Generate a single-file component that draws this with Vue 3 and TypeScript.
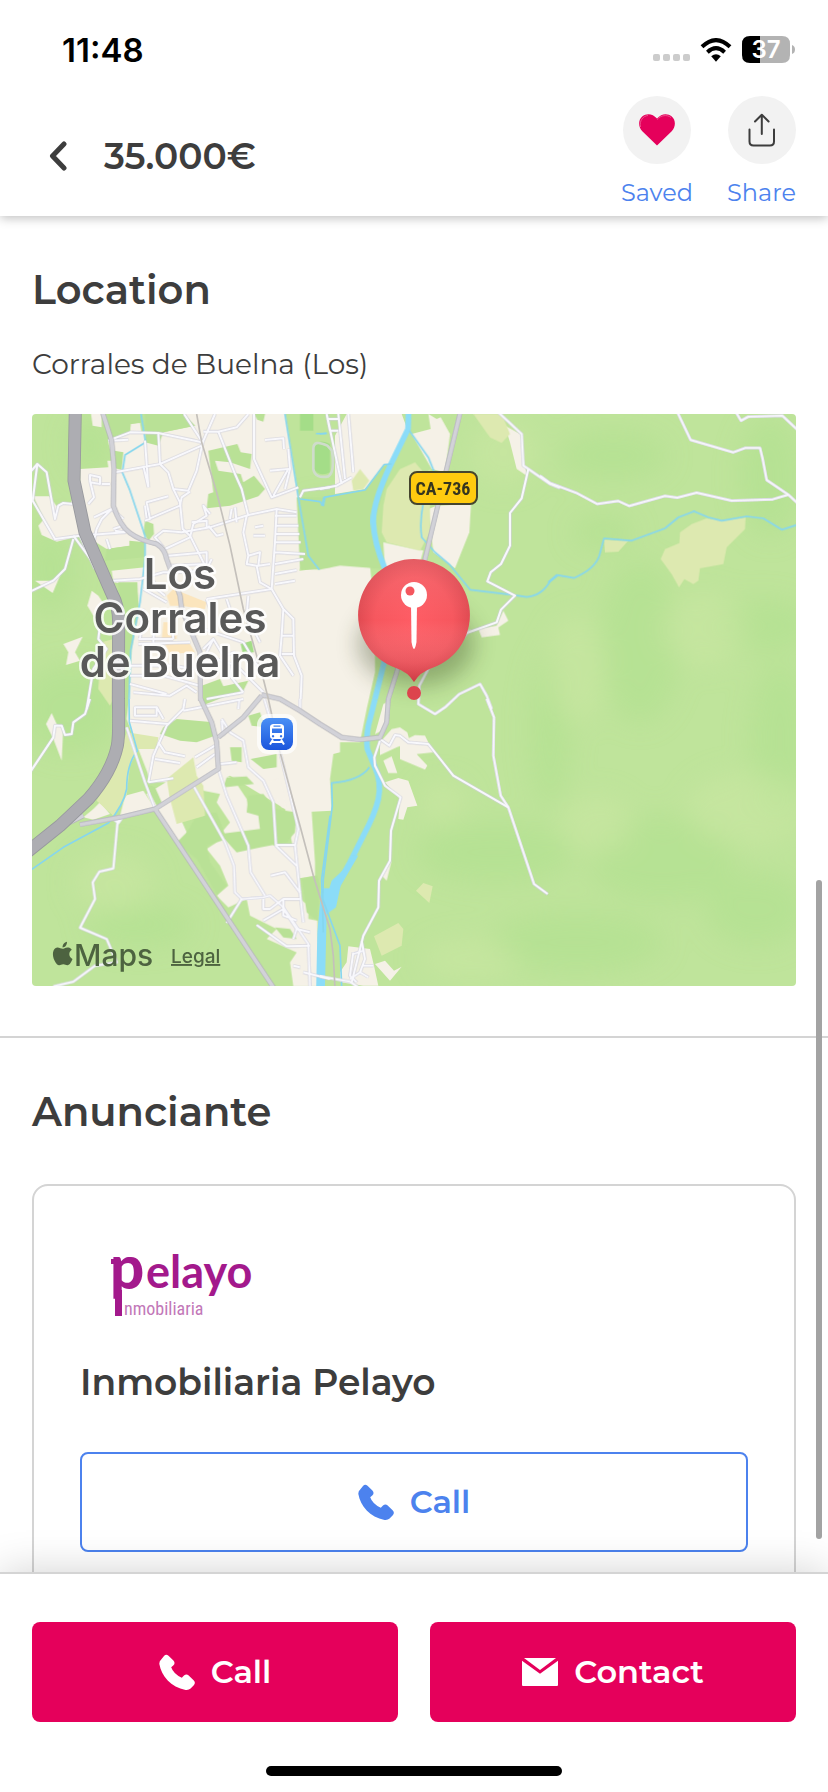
<script setup lang="ts">
type Tile = 'nw' | 'n' | 'ne' | 'sw' | 's'
type Shapes = Partial<Record<Tile, string[]>>
interface Feature { cls: string; d: string; at: string }

// The map is drawn in tiles; each tile keeps its own local coordinates.
const origin: Record<Tile, [number, number]> = {
  nw: [0, 0], n: [870, 0], ne: [1560, 0], sw: [0, 870], s: [870, 870],
}

const town: Shapes = {
  nw: [
    'M183 15H215V55L188 50Z',
    'M235 100L240 78 300 70 302 45 330 42 335 72 390 70 400 70 495 50 460 15H765L805 265 825 440 808 485 900 475 920 465 935 380 1010 375 1025 520 1035 750 1035 790 1010 900 990 1000 930 1000 930 1030 910 1035 900 1110 905 1205 845 1208 855 1360 855 1400 808 1408 765 1200 600 1100 470 1130 400 1120 360 1120 352 1090 290 930 297 870 305 720 328 600 320 530 250 520 245 485 345 475 345 448 300 410 230 420 190 395 150 370 118 290 150 225 150 180 235 175 232 155 250 155Z',
    'M10 262L58 262 80 292 95 282 130 284 150 340 152 380 80 398 35 378 25 350 42 330Z',
    'M15 515L60 515 90 500 68 552Z', 'M185 545L205 560 232 600 190 620 172 590Z', 'M100 705L158 683 135 730 150 755 108 768 115 730Z',
  ],
  n: [
    'M45 80L80 15H245L262 60 210 165 190 170 135 240 45 255Z',
    'M325 15L350 30 362 25 390 75 375 190 335 180 275 75 332 60Z', 'M350 290L453 285 448 370 405 478 340 430 325 300Z',
    'M190 400L310 425 300 460 195 480Z', 'M555 50L600 75 620 200 590 180 570 100Z', 'M550 605L565 635 535 655 540 678 485 685 475 660 530 650Z',
    'M435 665L455 662 430 690Z',
  ],
  sw: [
    'M48 75L65 42 80 75 100 85 95 185 70 120Z', 'M190 330L210 310 240 345 190 362 160 355Z', 'M285 290L340 275 372 325 270 350Z',
    'M375 335L350 285 415 245 420 290 470 400 465 430 435 425Z', 'M500 245L565 215 610 240 650 300 655 330 720 350 730 440 800 440 810 600 835 620 835 660 862 665 865 862H790L780 790 800 760 710 720 740 690 660 650 650 600 595 625 560 590 595 560 570 500 530 450 560 430 575 400 600 370 560 310 570 285 520 275Z',
    'M355 250L368 180 385 120 480 130 545 120 560 200 480 180 430 240Z', 'M705 280L700 250 750 240 770 330 755 325 740 300Z',
  ],
  s: [
    'M190 15L200 10 195 90 165 105Z', 'M180 130L215 90 240 85 262 100 270 130 230 145 180 168Z', 'M240 130L285 108 315 110 340 160 290 165 322 200 315 212 240 180Z',
    'M190 185L215 172 232 222 205 222Z', 'M195 250L235 237 265 245 292 320 262 325 250 362 235 360 240 300Z', 'M185 530L215 485 200 545Z',
    'M85 742L150 750 162 800 175 860 130 860 62 850 60 820 80 790Z', 'M165 795L195 785 222 815 245 803 210 845Z',
  ],
}

const park: Shapes = {
  nw: [
    'M233 15H330L335 40 302 45 300 70 238 90Z', 'M345 15H462L495 50 400 70 385 110 345 100Z', 'M253 125L280 130 275 182 255 178Z',
    'M535 125L622 105 632 130 665 135 660 180 600 160 555 155 565 185 632 195 640 220 672 200 705 240 685 262 600 290 530 298 535 255 550 250Z',
    'M345 335L370 345 372 375 355 395 340 372Z', 'M298 395L345 400 345 445 225 455 230 420 298 410Z', 'M672 15H705L700 38 682 32Z',
    'M285 940L265 520 322 520 325 590 300 730Z', 'M515 830L570 810 580 832 655 815 640 845 580 865 515 890Z',
  ],
  n: ['M5 265L135 243 190 170 215 165 160 345 195 480 60 470 0 482-60 480-70 265Z'],
  sw: ['M400 85L440 60 550 70 555 110 500 130 450 125 390 105Z', 'M600 145H635V190L605 185Z', 'M590 235L650 232 672 255 580 265Z', 'M655 50L690 40 705 85 665 80Z', 'M662 180L740 165 740 205 700 210Z',
    'M470 400L500 350 560 340 590 420 560 430 530 440 540 490 590 560 560 590 590 640 500 480 440 430Z', 'M655 290L700 285 735 330 800 340 795 400 770 430 690 445 620 460 570 405 690 390 685 350 650 340Z',
    'M815 540L862 530 870 565 862 665 830 640Z', 'M735 685L780 690 800 720 760 715Z', 'M345 255L375 265 395 310 380 320Z'],
}
const bright: Shapes = { nw: ['M632 705L665 695 672 730 638 732Z', 'M850 105Q875 90 900 105V190Q870 205 850 180Z', 'M810 15H850V65H810Z'] }
const field: Shapes = {
  nw: ['M215 700L250 690 250 870 240 890 205 840Z'],
  n: ['M460 15H545L570 75 545 102 510 85Z', 'M95 215L120 180 148 215 130 240 100 245Z', 'M200 240L240 180 285 160 315 195 330 180 330 370 300 425 200 400 185 370 190 290Z'],
  ne: ['M332 450L345 420 388 402 390 370 425 345 470 328 520 334 587 325 585 360 530 415 520 465 450 478 445 515 430 525 403 510 387 535 365 495Z', 'M162 392L235 395 205 428 165 430Z'],
  sw: ['M290 100L385 115 380 150 325 150 300 200 290 290 250 350 200 305 260 190Z', 'M410 240L490 175 500 230 520 260 525 350 440 375 420 300Z'],
  s: ['M288 575L310 552 338 562 328 612Z', 'M162 712L235 672 250 690 245 740 185 770Z'],
}
const civic: Shapes = { nw: ['M410 560L430 540 530 580 525 600 450 590 420 590Z', 'M400 640H440V690L395 692Z', 'M405 705L480 705 495 730 420 735Z'] }

const river: Shapes = {
  n: ['M266 0L264 60 213 165Q158 280 160 340 162 400 195 480L215 640 190 770 165 870'],
  s: ['M165 0L145 80Q138 120 142 150L165 205Q185 250 175 300 165 345 130 410L90 490 40 580'],
}
const pool: Shapes = { s: ['M95 470L75 508 35 545 28 568 4 567-8 700-12 900H14L20 645 48 625 62 560 115 470Z'] }
const stream: Shapes = {
  nw: ['M333 15L347 100 285 138 277 190 300 245 345 380 345 450 330 580 302 725 297 870', 'M765 15L805 265 835 440 868 482', 'M810 270L870 278 880 290 885 265', 'M858 74H890'],
  n: ['M0 75L20 72', 'M5 290L12 265 135 243 192 167 214 165', 'M268 65L325 145 345 195', 'M310 280Q298 340 305 385L345 430 390 468 450 542 580 558 620 564Q665 560 690 517L712 500'],
  ne: ['M-5 520L20 498 72 507Q135 480 148 440L162 388 245 395 345 358 385 325 432 307 475 325 515 335 590 322 640 328 695 362 740 348'],
  sw: ['M297 0L298 70 322 155Q290 195 290 270 280 320 235 372L100 445 0 515', 'M900 350L875 540 880 700'],
  s: ['M148 205Q120 245 35 252L37 320 10 540 8 600 60 740 65 862'],
}

const lanes: Shapes = {
  nw: [
    'M0 190L22 165 50 190 75 330 85 290 100 282 128 285', 'M22 165L8 275 75 390 150 380 195 480', 'M0 548L70 515 105 480 130 390', 'M130 380L200 475', 'M210 650L205 690 230 720 190 780 170 900',
    'M235 95L300 70 385 72 495 95M240 95L295 92', 'M385 72L390 165 515 110M345 95L355 235M340 170L355 235M255 190L390 165', 'M390 165L415 190 430 240 475 245 500 185 518 100 462 15',
    'M518 100L555 15M520 68L565 68 620 55 655 15', 'M565 68L615 195 635 240 655 320', 'M672 15L672 150 725 265 805 235M720 185L775 180 730 260M705 93L760 88 762 120', 'M430 240L450 280 458 360 480 380 530 480',
    'M345 335L360 330 350 280 415 262M345 290L350 328M360 328L450 290 455 265 480 248', 'M400 415L375 385 400 365 455 370 540 355 655 318 740 300 800 310', 'M405 420L480 385 490 345 530 320 520 290 540 315',
    'M485 340L530 335 530 355M535 350L560 380 580 375M600 330L605 300M620 340L615 295', 'M740 300L735 400 725 540 530 570M735 320H800M735 350H805M735 375H808M735 400H812M735 430L825 435M735 465L820 450M735 495L800 483M735 525L795 515',
    'M675 355L700 350M670 380H705M650 320L640 370 655 440 690 430 685 470 720 465M655 440L650 465 680 470 690 520 725 540', 'M180 215V198L210 205V225L180 220M180 215L192 265 175 285M215 225L240 225M192 325L245 300 280 330M245 300L215 330 200 360 192 395',
    'M250 360L280 350 285 370 255 365M150 380L285 370M230 390L240 420', 'M415 440L530 430 530 465 420 470M430 490L530 485', 'M250 515L330 510 400 490 430 490M340 540L410 580M355 520L405 560M370 515L385 545',
    'M725 540L760 600 790 630 792 740 815 800 812 870M760 600L755 680 790 680M755 735L792 735M755 680L750 740 790 800', 'M590 570L600 600M530 570L540 600M655 560L650 620 690 700', 'M520 660L640 700 700 800M530 730L550 690 580 740 615 730M550 690L520 720',
    'M325 690H430M325 705L480 700M340 600L330 690M375 600L370 700M430 690L425 640', 'M300 770H430L490 780M300 800H400L510 830M300 825L410 855M310 850L420 860 470 830 500 850', 'M530 740L620 770 700 850M615 730L600 800 640 850M530 870L640 850',
    'M775 120L780 180 765 240M495 95L515 100M545 450L530 480', 'M810 265L820 245 900 235',
  ],
  n: ['M20 15L65 225M55 15L75 210M85 15L100 190M20 30H55M30 65H55M20 15L30 65', 'M0 240L50 230 95 205', 'M535 10L605 75 610 170 625 180 690 225 720 237', 'M625 180L605 268 570 312V410L543 465 512 490 502 517 585 560 543 602 530 640 440 672 420 700', 'M330 770L298 830 295 885 345 915 375 895 418 855 480 825 500 860 515 900'],
  ne: ['M-30 200L0 222 80 252 142 285 205 276 238 291 345 261 382 266 440 251 545 275 668 271 715 257', 'M380 5L422 93 550 130 585 117H630L638 150 650 213 715 257 745 285', 'M555 5L573 35 595 23 697 20 745 65'],
  sw: ['M180 0L165 45 130 70 125 105 105 108 95 80 75 80 70 115 0 220', 'M290 85L345 250 375 330', 'M265 360L262 375 250 508 208 518 188 550 195 600 150 686 230 720 260 790 195 800 130 848 70 862M250 360L265 372 275 358', 'M490 260L585 430 612 500 615 580 635 600 700 595 720 590 760 625 835 735 840 862',
    'M355 250L370 170 410 80 460 30 465 0M300 65L415 75M315 25H380V50H315ZM380 25L400 60M460 35L640 0M355 250L430 238', 'M385 130L405 160 465 172M375 180L450 192M495 175L555 140M500 205L555 165', 'M565 210L590 290 655 440 662 520 705 590M575 60L600 100 640 125 655 205 700 245 730 310 738 440 800 500M740 438H795', 'M703 0L750 160 805 390 795 440 812 600 820 670', 'M575 65L580 110M625 30L628 0M810 0V30', 'M635 600L590 672M722 530L765 520 810 580M700 600L700 630 720 630 760 600 810 600M700 665L760 630 800 690 840 700M680 678L770 742 840 740M760 600L760 650 800 665M790 800L810 805M800 690L790 720M820 820L900 840', 'M570 195L620 190'],
  s: ['M500 0L522 55 520 170 542 290 565 325 642 555 683 585', 'M565 325L400 230 325 135 265 130 240 110 225 108 208 140 180 120', 'M180 125L163 175 165 200 195 260 242 295 213 395 210 485 177 545 175 625 130 710 95 850', 'M100 760L90 830 110 850M125 725L135 780 120 820 90 840M100 765L130 755M130 800L160 800M120 820L145 835', 'M0 832L90 848 130 875'],
}
const streets: Shapes = {
  nw: ['M216 5L245 95 252 180 250 290Q270 350 300 372T380 405Q405 420 410 450L450 560 455 600 510 730 512 875'],
  n: ['M423 0L315 450 230 790 205 870 200 940 180 985 120 992 65 985 0 945-60 905-120 870-175 857'],
  sw: ['M512 0L545 70 560 130 565 210 375 330 270 355 150 377M375 330L740 880', 'M565 115L640 55 695-10', 'M-2 460L90 385 160 350'],
}
const rail: Shapes = { nw: ['M500 15L515 100 560 250 600 410 640 600 700 810 715 870 750 1030 810 1250 850 1400 900 1560 910 1640 915 1740'] }
const motorway: Shapes = { nw: ['M136 0L132 215 165 370 246 555Q266 590 266 640L265 870Q268 980 262 1010 245 1090 175 1170L90 1250-20 1338'] }

const layers: [string, Shapes][] = [
  ['town', town], ['park', park], ['bright', bright], ['field', field], ['civic', civic],
  ['river', river], ['pool', pool], ['stream', stream],
  ['lane-edge', lanes], ['lane', lanes], ['street-edge', streets], ['street', streets],
  ['rail', rail], ['motorway-edge', motorway], ['motorway', motorway],
]
const features: Feature[] = layers.flatMap(([cls, shapes]) =>
  (Object.keys(shapes) as Tile[]).flatMap((tile) =>
    (shapes[tile] ?? []).map((d) => ({ cls, d, at: `translate(${origin[tile].join(' ')})` })),
  ),
)

// Terrain shading: cx, cy, rx, ry, tone
const shades: [number, number, number, number, string][] = [
  [120, 900, 150, 130, 'dark'], [60, 480, 70, 130, 'dark'], [180, 110, 60, 90, 'dark'], [330, 1550, 160, 60, 'dark'],
  [870, 380, 80, 100, 'dark'], [1560, 960, 60, 240, 'dark'], [1400, 1330, 240, 90, 'dark'], [1750, 140, 160, 70, 'dark'],
  [2220, 200, 90, 180, 'dark'], [1720, 370, 90, 50, 'dark'], [1830, 700, 120, 240, 'dark'], [2200, 650, 150, 80, 'dark'],
  [1640, 1600, 260, 90, 'dark'], [2250, 1000, 90, 240, 'dark'], [1900, 1350, 220, 130, 'dark'], [2180, 1500, 150, 110, 'dark'],
  [1640, 780, 90, 160, 'light'], [2020, 660, 130, 110, 'light'], [2150, 1200, 180, 110, 'light'], [1320, 1650, 150, 60, 'light'],
  [1240, 1180, 70, 60, 'light'], [1420, 130, 100, 100, 'light'], [1700, 1250, 110, 90, 'light'], [250, 1420, 120, 90, 'light'],
]

const phone = 'M2.2 5.4 5 2.1Q7-.6 9.5 1.7L14.400 6.500Q16.600 8.900 14.500 11.200L12.200 13.200Q14.200 19.500 22.800 23.800L25 21.600Q27.400 19.500 29.700 21.500L34.600 26.200Q37 28.700 34.800 31.200L31.600 34.500Q29.700 36.300 26.600 35.900C12 33.300 2.300 22 .4 10.300Q0 7.400 2.200 5.400Z'
</script>

<template>
  <div class="screen">
    <header class="top">
      <div class="status">
        <span class="time">11:48</span>
        <div class="signals">
          <span class="dots"><i></i><i></i><i></i><i></i></span>
          <svg class="wifi" viewBox="0 0 32 24" aria-label="Wi-Fi">
            <path d="M2 8.800Q16-4.600 30 8.800" /><path d="M7.400 14.200Q16 6.200 24.600 14.200" />
            <path class="solid" d="M11.200 18.300Q16 14 20.800 18.300L16 23.800Z" />
          </svg>
          <svg class="battery" viewBox="0 0 54 28" aria-label="Battery 37%">
            <path class="rest" d="M18 0H40Q48 0 48 8V19Q48 27 40 27H18Z" />
            <path d="M18 0H8Q0 0 0 8V19Q0 27 8 27H18Z" />
            <path class="rest" d="M50 9Q53 10 53 13.500T50 18Z" />
            <text x="24" y="22">37</text>
          </svg>
        </div>
      </div>
      <div class="toolbar">
        <button class="back" type="button" aria-label="Back">
          <svg viewBox="0 0 18 30"><path d="M15 3 3.500 15 15 27" /></svg>
        </button>
        <strong class="price">35.000€</strong>
        <div class="actions">
          <button class="action" type="button">
            <span class="disc">
              <svg class="heart" viewBox="0 0 36 32">
                <path d="M18 31.500 3.300 17.300C-1.200 12.500-.6 5.800 3.200 2.600 7.600-1 13.600-.4 18 4.600 22.400-.4 28.400-1 32.800 2.600 36.600 5.800 37.200 12.500 32.700 17.300Z" />
                <path class="shine" d="M1.500 13C.2 7 4 1.800 9 1.500M18 5.600C22 1 28 .4 32 3.500" />
              </svg>
            </span>
            Saved
          </button>
          <button class="action" type="button">
            <span class="disc">
              <svg class="share" viewBox="0 0 28 34">
                <path d="M1.500 16.500V28.500Q1.500 32.500 5.500 32.500H22Q26 32.500 26 28.500V16.500M13.800 21V2M7 8.500 13.800 1.700 20.600 8.500" />
              </svg>
            </span>
            Share
          </button>
        </div>
      </div>
    </header>

    <main class="content">
      <section class="block">
        <h2>Location</h2>
        <p class="place">Corrales de Buelna (Los)</p>
        <svg class="map" viewBox="0 0 764 572" role="group" aria-label="Map of Los Corrales de Buelna">
          <defs>
            <filter id="haze" x="-50%" y="-50%" width="200%" height="200%"><feGaussianBlur stdDeviation="38" /></filter>
            <filter id="soft" x="-50%" y="-50%" width="200%" height="200%"><feGaussianBlur stdDeviation="11" /></filter>
            <radialGradient id="balloon" cx=".5" cy=".5" r=".58">
              <stop offset="0" stop-color="#ff5c64" /><stop offset=".6" stop-color="#f6575e" /><stop offset="1" stop-color="#d5434b" />
            </radialGradient>
            <linearGradient id="gloss" x2="0" y2="1">
              <stop offset="0" stop-color="#fff" stop-opacity=".1" /><stop offset=".5" stop-color="#fff" stop-opacity="0" />
              <stop offset="1" stop-color="#a01020" stop-opacity=".3" />
            </linearGradient>
            <linearGradient id="station" x2="0" y2="1"><stop offset="0" stop-color="#4a90f5" /><stop offset="1" stop-color="#1b55dc" /></linearGradient>
          </defs>
          <rect class="land" width="764" height="572" />
          <g transform="translate(-2 -5) scale(.33333)">
            <g filter="url(#haze)">
              <ellipse v-for="(s, i) in shades" :key="i" :class="s[4]" :cx="s[0]" :cy="s[1]" :rx="s[2]" :ry="s[3]" />
            </g>
            <path v-for="(f, i) in features" :key="i" :class="f.cls" :d="f.d" :transform="f.at" />
            <path class="track" d="M892 110Q850 90 850 120V180Q855 210 895 202Q915 190 906 125Z" />
          </g>

          <g class="city">
            <text x="148" y="175">Los</text>
            <text x="148" y="219">Corrales</text>
            <text x="148" y="263">de Buelna</text>
          </g>

          <rect class="shield" x="378" y="58" width="67" height="32" rx="7" />
          <text class="shield-text" x="411" y="81">CA-736</text>

          <g transform="translate(229 304)">
            <rect class="halo" x="-4" y="-4" width="40" height="40" rx="11" />
            <rect width="32" height="32" rx="8" fill="url(#station)" />
            <path class="train" fill-rule="evenodd" d="M12 6H20Q23 6.500 23 9V18Q23 21 20 21H12Q9 21 9 18V9Q9 6.500 12 6ZM12.500 7.600H19.500V8.800H12.500ZM11 10.500V15H21V10.500ZM12 17A1.200 1.200 0 1 0 12.100 17ZM20 17A1.200 1.200 0 1 0 20.100 17Z" />
            <path class="rails" d="M12 21.500 9 26.500M20 21.500 23 26.500M11 24H21" />
          </g>

          <ellipse class="pin-shadow" cx="384" cy="230" rx="58" ry="42" filter="url(#soft)" />
          <g>
            <path fill="url(#balloon)" d="M382 145A56 56 0 0 1 400 254Q388 258 382 268 376 258 364 254A56 56 0 0 1 382 145Z" />
            <path fill="url(#gloss)" d="M382 145A56 56 0 0 1 400 254Q388 258 382 268 376 258 364 254A56 56 0 0 1 382 145Z" />
            <path class="pin-glyph" d="M379 190H385L384.500 228Q382 242 379.500 228Z" />
            <circle class="pin-glyph" cx="382" cy="181" r="13" />
            <circle class="pin-hole" cx="378" cy="177" r="4.500" />
            <circle class="pin-dot" cx="382" cy="279" r="7" />
          </g>

          <g class="credit">
            <path d="M36.500 533.500C33.500 533 32 534.800 30.600 534.800 29 534.800 27.500 533.400 25.300 533.500 20.500 534 19.800 541 22.500 546.500 24 549.500 25.500 551.400 27.300 551.300 28.800 551.200 29.300 550.300 31.300 550.300 33.200 550.300 33.700 551.300 35.400 551.300 37.800 551.200 39.500 547.500 40.500 545 36.500 543 36.300 537.800 39.800 535.800 39 534.500 37.800 533.700 36.500 533.500ZM34.900 527.800C32.500 528.300 30.300 530.600 30.600 533.500 33.200 533.500 35.300 530.700 34.900 527.800Z" />
            <text class="maps" x="42" y="552">Maps</text>
            <a href="#legal"><text class="legal" x="139" y="549">Legal</text></a>
          </g>
        </svg>
      </section>

      <section class="block">
        <h2>Anunciante</h2>
        <article class="card">
          <svg class="logo" viewBox="0 0 200 100" role="img" aria-label="Pelayo Inmobiliaria">
            <text class="logo-p" x="30" y="57">p</text>
            <text class="logo-name" x="66" y="56">elayo</text>
            <path d="M31 27H38V32H31ZM35 58H42V84H35Z" />
            <text class="logo-sub" x="44" y="83">nmobiliaria</text>
          </svg>
          <h3>Inmobiliaria Pelayo</h3>
          <button class="btn outline" type="button">
            <svg class="phone" viewBox="0 0 36 36"><path :d="phone" /></svg>Call
          </button>
        </article>
      </section>
      <div class="scrollbar"></div>
    </main>

    <footer class="bottom">
      <div class="buttons">
        <button class="btn solid-btn" type="button"><svg class="phone" viewBox="0 0 36 36"><path :d="phone" /></svg>Call</button>
        <button class="btn solid-btn" type="button">
          <svg class="mail" viewBox="0 0 36 28"><path d="M2 0H34L18 12ZM0 2.800 18 15.800 36 2.800V27Q36 28 35 28H1Q0 28 0 27Z" /></svg>Contact
        </button>
      </div>
      <div class="home"></div>
    </footer>
  </div>
</template>

<style>
body { background: #fff; }
</style>

<style scoped>
.screen { display: flex; flex-direction: column; height: 100vh; overflow: hidden; background: #fff; color: #3d3d3d; font-family: Montserrat, Inter, sans-serif; }
button { padding: 0; border: 0; background: none; color: inherit; font: inherit; cursor: pointer; }
svg { display: block; }
h2, h3, p { margin: 0; }

.top { position: relative; z-index: 2; flex: none; background: #fff; box-shadow: 0 2px 10px rgba(0, 0, 0, .26); }
.status { display: flex; align-items: center; justify-content: space-between; box-sizing: border-box; height: 96px; padding: 4px 32px 0 62px; }
.time { color: #000; font: 600 33px/40px Inter, sans-serif; }
.signals { display: flex; align-items: center; gap: 10px; }
.dots { display: flex; align-self: flex-end; gap: 3px; padding-bottom: 3px; }
.dots i { width: 7px; height: 7px; border-radius: 2px; background: #ccc; }
.wifi { width: 32px; height: 24px; }
.wifi path { fill: none; stroke: #000; stroke-width: 4; }
.wifi .solid { fill: #000; stroke: none; }
.battery { width: 54px; height: 28px; }
.battery .rest { fill: #b3b3b3; }
.battery text { fill: #fff; font: 600 24px Inter, sans-serif; text-anchor: middle; }
.toolbar { display: flex; align-items: center; height: 120px; padding: 0 32px 0 48px; }
.back { width: 56px; padding: 8px 0; }
.back svg { width: 20px; height: 30px; }
.back path { fill: none; stroke: #3d3d3d; stroke-width: 5; stroke-linecap: round; stroke-linejoin: round; }
.price { font-size: 36px; line-height: 44px; font-weight: 600; }
.actions { display: flex; align-self: flex-start; gap: 34px; margin-left: auto; }
.action { display: flex; flex-direction: column; align-items: center; gap: 15px; min-width: 68px; color: #4c82ee; font-size: 24px; line-height: 28px; font-weight: 400; }
.disc { display: grid; place-items: center; width: 68px; height: 68px; border-radius: 50%; background: #f2f2f2; }
.heart { width: 36px; height: 32px; fill: #e5005b; }
.heart .shine { fill: none; stroke: #ee4f8d; stroke-width: 1; }
.share { width: 28px; height: 34px; fill: none; stroke: #3d3d3d; stroke-width: 2; stroke-linecap: round; stroke-linejoin: round; }

.content { position: relative; flex: 1; min-height: 0; overflow: hidden; }
.block { padding: 50px 32px; }
.block + .block { border-top: 2px solid #d4d4d4; }
h2 { font-size: 40px; line-height: 48px; font-weight: 600; }
.place { margin: 32px 0; font-size: 28px; line-height: 36px; font-weight: 400; }
.map { width: 100%; height: auto; border-radius: 4px; overflow: hidden; }

.land { fill: #bfe49b; }
.dark { fill: #addf8e; opacity: .5; }
.light { fill: #cbe7a2; opacity: .55; }
.town { fill: #f5f1e7; }
.park { fill: #b9e196; }
.bright { fill: #a4dd88; }
.field { fill: #dde9b0; }
.civic { fill: #fbe5bd; }
.pool { fill: #8bdcf8; }
.river, .stream, .lane, .lane-edge, .street, .street-edge, .rail, .motorway, .motorway-edge, .track { fill: none; stroke-linejoin: round; }
.river { stroke: #8bdcf8; stroke-width: 17; }
.stream { stroke: #86d6ee; stroke-width: 5; }
.lane-edge { stroke: #d0d0dc; stroke-width: 9; }
.lane { stroke: #f8f8fc; stroke-width: 6; }
.street-edge { stroke: #b5b5bb; stroke-width: 15; }
.street { stroke: #d2d2d8; stroke-width: 11; }
.rail { stroke: #c4c0bb; stroke-width: 5; }
.motorway-edge { stroke: #97989d; stroke-width: 39; }
.motorway { stroke: #adadb2; stroke-width: 34; }
.track { stroke: #cfdccb; stroke-width: 8; }
.city text { fill: #595959; stroke: #fff; stroke-opacity: .85; stroke-width: 5; stroke-linejoin: round; paint-order: stroke; font: 600 42px Inter, sans-serif; text-anchor: middle; }
.shield { fill: #ffcb0f; stroke: #45452e; stroke-width: 2; }
.shield-text { fill: #35351f; font: 700 18px "Roboto Condensed", Roboto, sans-serif; text-anchor: middle; }
.halo { fill: #fff; opacity: .7; }
.train { fill: #fff; }
.rails { fill: none; stroke: #fff; stroke-width: 2; }
.pin-shadow { fill: #30401c; opacity: .34; }
.pin-glyph { fill: #fff; }
.pin-hole { fill: #f4565e; }
.pin-dot { fill: #dd444d; }
.credit { fill: #4d6340; }
.maps { font: 500 30px Inter, sans-serif; }
.legal { font: 500 19px Inter, sans-serif; text-decoration: underline; }

.card { margin-top: 48px; padding: 46px; border: 2px solid #d4d4d4; border-radius: 16px; }
.logo { width: 200px; height: 100px; fill: #a3198c; }
.logo-p { font: 900 60px Lato, sans-serif; }
.logo-name { font: 700 45px Lato, sans-serif; }
.logo-sub { fill: #c277b8; font: 400 18px "Roboto Condensed", Roboto, sans-serif; }
h3 { margin: 28px 0 48px; font-size: 36px; line-height: 44px; font-weight: 600; }
.btn { display: flex; align-items: center; justify-content: center; gap: 16px; box-sizing: border-box; width: 100%; height: 100px; border-radius: 8px; font-size: 32px; line-height: 40px; font-weight: 600; }
.outline { border: 2px solid #4c82ee; color: #4c82ee; }
.phone { width: 36px; height: 36px; fill: currentColor; }
.mail { width: 36px; height: 28px; fill: currentColor; }
.scrollbar { position: absolute; top: 49%; right: 6px; bottom: 33px; width: 6px; border-radius: 3px; background: #a3a3a3; }

.bottom { position: relative; z-index: 2; flex: none; padding: 48px 32px 16px; border-top: 2px solid #d4d4d4; background: #fff; box-shadow: 0 0 40px rgba(0, 0, 0, .18); }
.buttons { display: grid; grid-template-columns: 1fr 1fr; gap: 32px; }
.solid-btn { background: #e5005b; color: #fff; }
.home { width: 296px; height: 10px; margin: 44px auto 0; border-radius: 5px; background: #000; }
</style>
